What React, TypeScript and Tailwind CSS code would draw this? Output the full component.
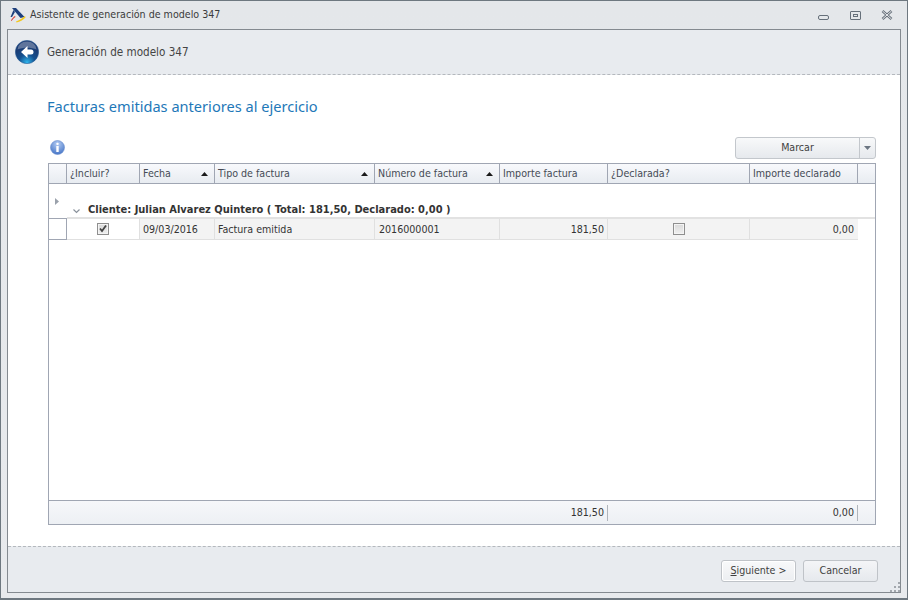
import React from "react";

/* ── Iconos ── */

const AeatLogo: React.FC = () => (
    <svg width="16" height="16" viewBox="0 0 16 16">
        <path d="M2 1h4l8.500 9-4 1z" fill="#1d3f7c" />
        <path d="M3.500 3L5 5 2 10H.5z" fill="#1d3f7c" />
        <path d="M1 13.500C2 11.500 3.500 10 5 9l.5 1C4 11 2.500 12.500 1.500 14z" fill="#d8322a" />
        <path d="M6 14.500C9 13.500 12 11.500 15 9l.5 1.500C13 13 10 15 6.500 15.500z" fill="#f2c81e" />
    </svg>
);

const BackIcon: React.FC = () => (
    <svg width="24" height="24" viewBox="0 0 24 24">
        <defs>
            <radialGradient id="orb" cx="50%" cy="95%" r="70%">
                <stop offset="0%" stopColor="#2fb6ee" />
                <stop offset="50%" stopColor="#14508f" />
                <stop offset="100%" stopColor="#1b3a72" />
            </radialGradient>
        </defs>
        <circle cx="12" cy="12" r="11.600" fill="url(#orb)" stroke="#2a5d96" strokeWidth="0.6" />
        <path d="M2.500 9.500a9.500 8 0 0119 0c-5-2.500-14-2.500-19 0z" fill="#ffffff" opacity="0.3" />
        <path d="M12.500 6l-6.500 6 6.500 6v-3.500h3.500a2.500 2.500 0 000-5h-3.500z" fill="#ffffff" />
    </svg>
);

const InfoIcon: React.FC = () => (
    <svg width="15" height="15" viewBox="0 0 15 15">
        <defs>
            <radialGradient id="inf" cx="50%" cy="25%" r="80%">
                <stop offset="0%" stopColor="#b5cdf3" />
                <stop offset="100%" stopColor="#3e6fc4" />
            </radialGradient>
        </defs>
        <circle cx="7.500" cy="7.500" r="7" fill="url(#inf)" stroke="#6a8fce" strokeWidth="0.6" />
        <rect x="6.300" y="2.800" width="2.400" height="2.200" rx="1" fill="#ffffff" />
        <rect x="6.300" y="6" width="2.400" height="6" fill="#ffffff" />
    </svg>
);

const SortUp: React.FC = () => (
    <svg width="7" height="4" viewBox="0 0 7 4" className="shrink-0">
        <path d="M3.500 0L7 4H0z" fill="#1a1a1a" />
    </svg>
);

const Check: React.FC<{ checked: boolean }> = ({ checked }) => (
    <span className="w-3 h-3 border border-[#8f8f8f] bg-gradient-to-b from-[#d9d9d9] to-[#f0f0f0] shadow-[inset_0_0_0_1px_#f4f4f4] flex items-center justify-center">
        {checked && (
            <svg width="10" height="10" viewBox="0 0 10 10">
                <path d="M2 4.500l2 2.500L8 1.500" fill="none" stroke="#444" strokeWidth="1.800" />
            </svg>
        )}
    </span>
);

const columns = [
    { label: "¿Incluir?", sort: false },
    { label: "Fecha", sort: true },
    { label: "Tipo de factura", sort: true },
    { label: "Número de factura", sort: true },
    { label: "Importe factura", sort: false },
    { label: "¿Declarada?", sort: false },
    { label: "Importe declarado", sort: false },
];

const gridCols = "grid grid-cols-[18px_73px_75px_160px_125px_108px_142px_108px_17px]";

export default function App() {
    return (
        <div className="w-[908px] h-[600px] border border-[#6e7880] border-b-2 bg-gradient-to-b from-[#e4e7ea] to-[#e8eaed] flex flex-col text-[10.6px] [font-stretch:condensed] text-[#333] overflow-hidden font-['DejaVu_Sans',sans-serif]">
            {/* Barra de titulo */}
            <div className="h-[28px] flex items-center pl-[9px] shrink-0">
                <AeatLogo />
                <span className="ml-[4px] text-[#3b3b3b]">Asistente de generación de modelo 347</span>
                <div className="ml-auto flex items-center pr-[14px] text-[#5d6670]">
                    <span className="w-[11px] h-[5px] border border-[#66707a] rounded-[2px] mt-[5px]" />
                    <span className="ml-[21px] w-[11px] h-[9px] border border-[#66707a] rounded-[1px] flex items-center justify-center">
                        <span className="w-[5px] h-[3px] border border-[#66707a]" />
                    </span>
                    <svg width="12" height="10" viewBox="0 0 12 10" className="ml-[20px]">
                        <path d="M1.500 1l9 8M10.500 1l-9 8" stroke="#66707a" strokeWidth="2.600" />
                        <path d="M1.500 1l9 8M10.500 1l-9 8" stroke="#e6e8eb" strokeWidth="1" />
                    </svg>
                </div>
            </div>

            {/* Marco interior */}
            <div className="ml-[6px] mr-[6px] mb-[5px] flex-1 border border-[#848a90] flex flex-col min-h-0">
                <div className="h-[45px] bg-[#e8ebef] border-b border-dashed border-[#b4b8bd] flex items-center pl-[7px] shrink-0">
                    <BackIcon />
                    <span className="ml-[8px] pt-[2px] text-[11.6px] text-[#444]">Generación de modelo 347</span>
                </div>

                <div className="flex-1 bg-white flex flex-col pl-[40px] pr-[24px] min-h-0">
                    <h1 className="mt-[19px] -ml-px text-[14.6px] leading-[24px] font-normal [font-stretch:normal] font-['Noto_Sans',sans-serif] text-[#1e78b8]">Facturas emitidas anteriores al ejercicio</h1>

                    <div className="mt-[19px] h-[22px] flex items-center justify-between shrink-0">
                        <span className="ml-[2px] -mt-[2px]"><InfoIcon /></span>
                        <div className="flex h-[22px] border border-[#c3c7cc] rounded-[3px] bg-gradient-to-b from-[#f8f9fa] to-[#e6e9ed] text-[#3f3f3f]">
                            <span className="w-[123px] flex items-center justify-center">Marcar</span>
                            <span className="w-[16px] border-l border-[#c3c7cc] flex items-center justify-center">
                                <svg width="7" height="4" viewBox="0 0 7 4"><path d="M0 0h7L3.500 4z" fill="#6c7682" /></svg>
                            </span>
                        </div>
                    </div>

                    {/* Tabla */}
                    <div className="mt-[4px] mb-[21px] flex-1 border border-[#a0a6b3] flex flex-col min-h-0">
                        <div className={`${gridCols} h-[20px] border-b border-[#a0a6b3] bg-gradient-to-b from-[#f8f9fc] to-[#e8ecf1] shrink-0`}>
                            <div className="border-r border-[#a0a6b3]" />
                            {columns.map((col) => (
                                <div key={col.label} className="border-r border-[#a0a6b3] flex items-center justify-between pl-[3px] pr-[6px] text-[#454b55] whitespace-nowrap">
                                    {col.label}
                                    {col.sort && <SortUp />}
                                </div>
                            ))}
                        </div>

                        <div className="flex-1 bg-white min-h-0">
                            <div className="h-[35px] flex">
                                <div className="w-[18px] flex items-center justify-center border-b border-[#a0a6b3]">
                                    <svg width="4" height="7" viewBox="0 0 4 7" className="-ml-[2px]"><path d="M0 0l4 3.500L0 7z" fill="#9aa1ab" /></svg>
                                </div>
                                <div className="flex-1 flex items-end pl-[6px] whitespace-nowrap border-b-2 border-[#e2e2e2]">
                                    <svg width="7" height="5" viewBox="0 0 7 5" className="mb-[3px]"><path d="M.5.500l3 3 3-3" fill="none" stroke="#8a929c" strokeWidth="1.200" /></svg>
                                    <span className="ml-[8px] -mb-px text-[11px] font-bold text-[#333]">Cliente: Julian Alvarez Quintero ( Total: 181,50, Declarado: 0,00 )</span>
                                </div>
                            </div>
                            <div className={`${gridCols} h-[21px]`}>
                                <div className="border-r border-b border-[#a0a6b3]" />
                                <div className="border-r border-b border-[#e0e0e0] flex items-center justify-center"><Check checked /></div>
                                <div className="border-r border-b border-[#e0e0e0] bg-[#f3f3f3] flex items-center pl-[3px] pt-[2px]">09/03/2016</div>
                                <div className="border-r border-b border-[#e0e0e0] bg-[#f3f3f3] flex items-center pl-[3px] pt-[2px]">Factura emitida</div>
                                <div className="border-r border-b border-[#e0e0e0] bg-[#f3f3f3] flex items-center pl-[4px] pt-[2px]">2016000001</div>
                                <div className="border-r border-b border-[#e0e0e0] bg-[#f3f3f3] flex items-center justify-end pr-[3px] pt-[2px]">181,50</div>
                                <div className="border-r border-b border-[#e0e0e0] bg-[#f3f3f3] flex items-center justify-center"><Check checked={false} /></div>
                                <div className="border-b border-[#e0e0e0] bg-[#f3f3f3] flex items-center justify-end pr-[4px] pt-[2px]">0,00</div>
                            </div>
                        </div>

                        {/* Totales */}
                        <div className={`${gridCols} h-[24px] border-t border-[#a0a6b3] bg-gradient-to-b from-[#f6f7fa] to-[#edf0f4] shrink-0`}>
                            <div className="col-span-5" />
                            <div className="flex items-center justify-end my-[4px] border-r border-[#b0b5bb] pr-[3px]">181,50</div>
                            <div />
                            <div className="flex items-center justify-end my-[4px] border-r border-[#b0b5bb] pr-[3px]">0,00</div>
                        </div>
                    </div>
                </div>

                <div className="h-[46px] pt-[2px] bg-[#e8ebef] border-t border-dashed border-[#b4b8bd] flex items-center justify-end pr-[22px] relative shrink-0">
                    <button className="w-[75px] h-[22px] rounded-[3px] border border-[#bfc3c8] bg-gradient-to-b from-[#f8f9fa] to-[#eceef1] shadow-[inset_0_0_0_1px_#fff] text-[#3f3f3f]"><span className="underline">S</span>iguiente &gt;</button>
                    <button className="ml-[7px] w-[75px] h-[22px] rounded-[3px] border border-[#bfc3c8] bg-gradient-to-b from-[#f4f5f7] to-[#e6e9ed] text-[#3f3f3f]">Cancelar</button>
                    <svg width="10" height="10" viewBox="0 0 10 10" className="absolute right-0 bottom-0">
                        <path d="M8 0h2v2H8zM4 4h2v2H4zM8 4h2v2H8zM0 8h2v2H0zM4 8h2v2H4zM8 8h2v2H8z" fill="#a3a8ae" />
                    </svg>
                </div>
            </div>
        </div>
    );
}
